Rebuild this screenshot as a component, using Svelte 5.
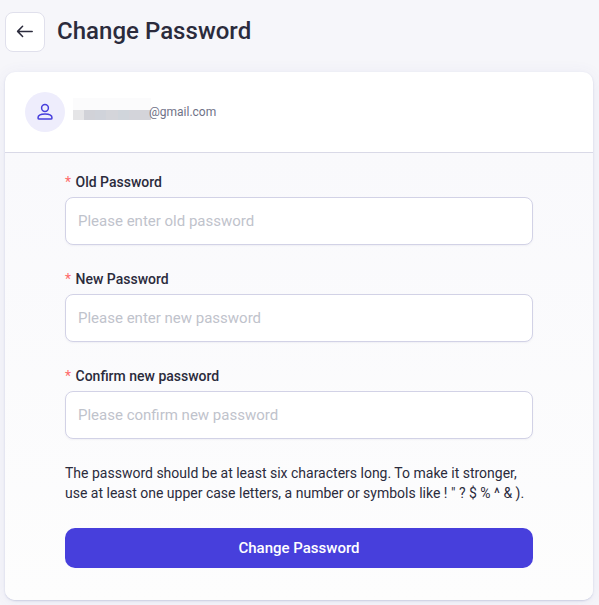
<script lang="ts">
  interface Field {
    id: string;
    label: string;
    placeholder: string;
  }

  const fields: Field[] = [
    { id: 'old', label: 'Old Password', placeholder: 'Please enter old password' },
    { id: 'new', label: 'New Password', placeholder: 'Please enter new password' },
    { id: 'confirm', label: 'Confirm new password', placeholder: 'Please confirm new password' },
  ];

  // tiles covering the private part of the address
  const tiles = ['#e5e5e7', '#d1d2d8', '#d0d3da', '#d4d5da', '#d0d5db', '#d3d4da', '#d4d4d9'];

  let values: Record<string, string> = $state({ old: '', new: '', confirm: '' });
</script>

<div class="page">
  <header class="top">
    <button class="back" type="button" aria-label="Back">
      <svg width="18" height="14" viewBox="0 0 18 14">
        <path d="M16.2 6.4H1.8M6.6 1.3L1.6 6.4L6.6 11.5" />
      </svg>
    </button>
    <h1>Change Password</h1>
  </header>

  <main class="card">
    <div class="account">
      <span class="avatar">
        <svg width="18" height="18" viewBox="0 0 18 18">
          <circle cx="9" cy="5" r="3.4" />
          <path d="M2 14.9C2 12.6 5 11.1 9 11.1s7 1.5 7 3.8c0 .8-.6 1.2-1.4 1.2H3.4c-.8 0-1.4-.4-1.4-1.2z" />
        </svg>
      </span>
      <span class="mask" aria-hidden="true">
        {#each tiles as color}
          <span class="tile" style="background: {color}"></span>
        {/each}
      </span>
      <span class="email">@gmail.com</span>
    </div>

    <form onsubmit={(e) => e.preventDefault()}>
      {#each fields as field (field.id)}
        <div class="field">
          <label for={field.id}><span class="star">*</span>{field.label}</label>
          <input id={field.id} type="password" placeholder={field.placeholder} bind:value={values[field.id]} />
        </div>
      {/each}
      <p class="hint">
        The password should be at least six characters long. To make it stronger,<br />
        use at least one upper case letters, a number or symbols like ! " ? $ % ^ & ).
      </p>
      <button class="submit" type="submit">Change Password</button>
    </form>
  </main>
</div>

<style>
  :global(body) {
    background: #f6f6f9;
  }

  .page {
    box-sizing: border-box;
    height: 605px;
    padding: 12px 6px 0 5px;
    overflow: hidden;
    font-family: Roboto, sans-serif;
    color: #2b2b3c;
    background: #f6f6fa;
  }

  .top {
    display: flex;
    align-items: center;
    gap: 12px;
    height: 40px;
    margin-bottom: 20px;
  }

  .back {
    display: flex;
    align-items: center;
    justify-content: center;
    box-sizing: border-box;
    width: 40px;
    height: 40px;
    padding: 0;
    border: 1px solid #e0e0ec;
    border-radius: 8px;
    background: #fff;
  }

  svg {
    fill: none;
    stroke: #2b2b3c;
    stroke-width: 1.5;
    stroke-linecap: round;
    stroke-linejoin: round;
  }

  h1 {
    margin: 0 0 2px;
    font-size: 24px;
    font-weight: 500;
    line-height: 36px;
    letter-spacing: 0.03px;
  }

  .card {
    height: 528px;
    border-radius: 10px;
    overflow: hidden;
    background: #fff;
    box-shadow: 0 1px 2px #c9cce0, 0 2px 16px rgba(80, 80, 160, 0.08);
  }

  .account {
    display: flex;
    align-items: center;
    box-sizing: border-box;
    height: 81px;
    padding: 0 20px;
    border-bottom: 1px solid #d9d9e7;
  }

  .avatar {
    display: flex;
    align-items: center;
    justify-content: center;
    width: 40px;
    height: 40px;
    margin-right: 8px;
    border-radius: 50%;
    background: #eeedfc;
  }

  .avatar svg {
    stroke: #473fdc;
  }

  .mask {
    display: flex;
    align-items: flex-end;
    width: 78px;
    height: 22px;
    margin-top: -6px;
    background: #fbfbfc;
  }

  .tile {
    flex: 1;
    height: 10px;
  }

  .email {
    margin-left: -2px;
    font-size: 12px;
    line-height: 20px;
    color: #6f7287;
  }

  form {
    height: 447px;
    box-sizing: border-box;
    padding: 19px 60px 0;
    background: linear-gradient(#f9f9fc, #fdfdfd);
  }

  .field {
    margin-bottom: 24px;
  }

  label {
    display: block;
    height: 25px;
    font-size: 14px;
    font-weight: 500;
    line-height: 20px;
  }

  .star {
    margin-right: 4.5px;
    font-weight: 400;
    color: #ff6b6b;
  }

  input {
    display: block;
    box-sizing: border-box;
    width: 100%;
    height: 48px;
    padding: 0 12px;
    border: 1px solid #d2d2e6;
    border-radius: 8px;
    outline: none;
    font: 15px Roboto, sans-serif;
    color: inherit;
    background: #fff;
    box-shadow: 0 1px 2px rgba(60, 60, 120, 0.06);
  }

  input::placeholder {
    color: #bfc3cc;
    opacity: 1;
  }

  .hint {
    margin: 0 0 25px;
    font-size: 14px;
    line-height: 20px;
    white-space: nowrap;
  }

  .submit {
    display: block;
    width: 100%;
    height: 40px;
    padding: 0;
    border: none;
    border-radius: 10px;
    font: 500 15px Roboto, sans-serif;
    color: #fff;
    background: #473fdc;
  }
</style>
